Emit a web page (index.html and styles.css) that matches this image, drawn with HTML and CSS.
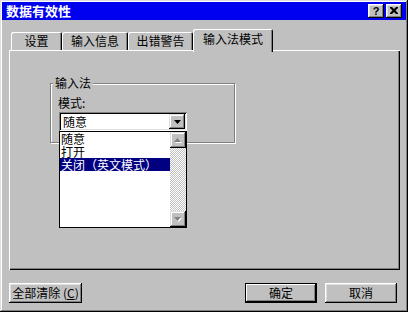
FILE: index.html
```html
<!DOCTYPE html>
<html lang="zh-CN">
<head>
<meta charset="utf-8">
<title>数据有效性</title>
<link rel="stylesheet" href="styles.css">
</head>
<body>
<div class="window">
  <div class="titlebar">
    <span class="title">数据有效性</span>
    <div class="caption-buttons">
      <div class="cap-btn cap-help">?</div>
      <div class="cap-btn">
        <svg width="8" height="7" viewBox="0 0 8 7"><path d="M0 0h2l2 2 2-2h2v1l-2.5 2.5 2.5 2.5v1h-2l-2-2-2 2h-2v-1l2.5-2.5-2.5-2.5z" fill="#000"/></svg>
      </div>
    </div>
  </div>
  <div class="body">
    <div class="tabs">
      <div class="tab t1">设置</div>
      <div class="tab t2">输入信息</div>
      <div class="tab t3">出错警告</div>
      <div class="tab active">输入法模式</div>
    </div>
    <div class="panel">
      <div class="group">
        <span class="legend">输入法</span>
        <div class="label">模式:</div>
        <div class="combo">
          <div class="combo-text">随意</div>
          <div class="combo-btn">
            <svg width="7" height="4" viewBox="0 0 7 4"><path d="M0 0h7l-3.5 4z" fill="#000"/></svg>
          </div>
          <div class="dropdown">
            <div class="list">
              <div class="item">随意</div>
              <div class="item">打开</div>
              <div class="item selected">关闭（英文模式）</div>
            </div>
            <div class="scrollbar">
              <div class="sb-btn">
                <svg width="8" height="5" viewBox="0 0 8 5"><path d="M1 5h7l-3.5-4z" fill="#fff"/><path d="M0 4h7l-3.5-4z" fill="#808080"/></svg>
              </div>
              <div class="sb-track"></div>
              <div class="sb-btn">
                <svg width="8" height="5" viewBox="0 0 8 5"><path d="M1 1h7l-3.5 4z" fill="#fff"/><path d="M0 0h7l-3.5 4z" fill="#808080"/></svg>
              </div>
            </div>
          </div>
        </div>
      </div>
    </div>
    <div class="buttons">
      <div class="btn btn-clear">全部清除 (<u>C</u>)</div>
      <div class="btn btn-ok">确定</div>
      <div class="btn btn-cancel">取消</div>
    </div>
  </div>
</div>
</body>
</html>
```
FILE: styles.css
```css
html, body {
  margin: 0;
  padding: 0;
  background: #c0c0c0;
}
body {
  font-family: "Noto Sans CJK SC", "Liberation Sans", sans-serif;
  font-size: 12px;
  color: #000;
}
.window {
  width: 408px;
  height: 312px;
  box-sizing: border-box;
  padding: 2px;
  background: #c0c0c0;
  box-shadow: inset -1px -1px #000, inset 1px 1px #dfdfdf, inset -2px -2px #808080, inset 2px 2px #fff;
  display: flex;
  flex-direction: column;
}
.titlebar {
  height: 18px;
  flex: none;
  background: #0000f0;
  color: #fff;
  display: flex;
  align-items: center;
  justify-content: space-between;
  padding: 0 4px 0 4px;
}
.title {
  font-weight: bold;
  font-size: 13px;
  line-height: 18px;
}
.caption-buttons {
  display: flex;
  gap: 2px;
}
.cap-btn {
  width: 16px;
  height: 14px;
  box-sizing: border-box;
  background: #c0c0c0;
  box-shadow: inset -1px -1px #000, inset 1px 1px #fff, inset -2px -2px #808080, inset 2px 2px #dfdfdf;
  display: flex;
  align-items: center;
  justify-content: center;
  color: #000;
  font: bold 11px/14px "Liberation Sans", sans-serif;
  padding-bottom: 1px;
}
.body {
  flex: 1;
  display: flex;
  flex-direction: column;
  padding: 9px 6px 0 7px;
}
.tabs {
  display: flex;
  align-items: flex-end;
  height: 21px;
  padding-left: 2px;
}
.tab {
  height: 18px;
  line-height: 18px;
  text-align: center;
  box-sizing: border-box;
  border-radius: 2px 2px 0 0;
  box-shadow: inset 1px 1px #fff, inset -1px 0 #000, inset -2px 0 #808080;
}
.t1 { width: 51px; }
.t2 { width: 66px; }
.t3 { width: 65px; }
.tab.active {
  width: 80px;
  height: 23px;
  line-height: 20px;
  margin-bottom: -2px;
  position: relative;
  z-index: 1;
  background: #c0c0c0;
}
.panel {
  height: 220px;
  box-sizing: border-box;
  padding: 33px 0 0 41px;
  box-shadow: inset 1px 1px #fff, inset -1px -1px #000, inset -2px -2px #808080;
}
.group {
  position: relative;
  width: 185px;
  height: 60px;
  box-sizing: border-box;
  border: 1px solid #808080;
  box-shadow: 1px 1px 0 #fff, inset 1px 1px 0 #fff;
  padding: 11px 0 0 7px;
}
.legend {
  position: absolute;
  left: 2px;
  top: -8px;
  padding: 0 2px;
  line-height: 14px;
  background: #c0c0c0;
}
.label {
  height: 16px;
  line-height: 16px;
}
.combo {
  position: relative;
  margin: 1px 0 0 1px;
  width: 128px;
  height: 19px;
  box-sizing: border-box;
  padding: 2px;
  background: #fff;
  box-shadow: inset 1px 1px #808080, inset -1px -1px #fff, inset 2px 2px #000, inset -2px -2px #dfdfdf;
  display: flex;
}
.combo-text {
  flex: 1;
  line-height: 15px;
  padding-left: 2px;
}
.combo-btn {
  width: 16px;
  height: 15px;
  background: #c0c0c0;
  box-shadow: inset -1px -1px #000, inset 1px 1px #dfdfdf, inset -2px -2px #808080, inset 2px 2px #fff;
  display: flex;
  align-items: center;
  justify-content: center;
}
.dropdown {
  position: absolute;
  left: 0;
  top: 100%;
  width: 128px;
  height: 97px;
  box-sizing: border-box;
  border: 1px solid #000;
  background: #fff;
  display: flex;
  z-index: 2;
}
.list {
  flex: 1;
}
.item {
  height: 13px;
  line-height: 13px;
  padding-left: 1px;
  white-space: nowrap;
}
.item.selected {
  background: #000080;
  color: #fff;
}
.scrollbar {
  width: 16px;
  display: flex;
  flex-direction: column;
}
.sb-btn {
  height: 16px;
  background: #c0c0c0;
  box-shadow: inset -1px -1px #000, inset 1px 1px #dfdfdf, inset -2px -2px #808080, inset 2px 2px #fff;
  display: flex;
  align-items: center;
  justify-content: center;
}
.sb-track {
  flex: 1;
  background: repeating-conic-gradient(#c0c0c0 0 25%, #fff 0 50%) 0 0 / 2px 2px;
}
.buttons {
  display: flex;
  margin-top: 13px;
  margin-right: 3px;
  gap: 8px;
}
.btn {
  height: 20px;
  line-height: 20px;
  box-sizing: border-box;
  text-align: center;
  background: #c0c0c0;
  box-shadow: inset -1px -1px #000, inset 1px 1px #fff, inset -2px -2px #808080, inset 2px 2px #dfdfdf;
}
.btn-clear {
  width: 73px;
  margin-right: auto;
  white-space: nowrap;
}
.btn-ok {
  width: 72px;
  box-shadow: inset 0 0 0 1px #000, inset -2px -2px #000, inset 2px 2px #fff, inset -3px -3px #808080;
}
.btn-cancel {
  width: 72px;
}
```
